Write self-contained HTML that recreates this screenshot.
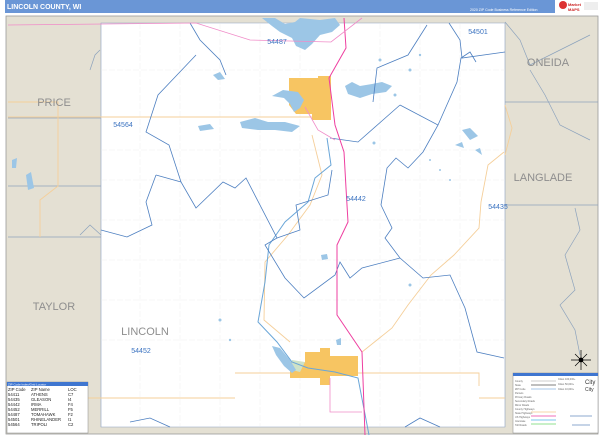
<!DOCTYPE html>
<html><head><style>
body{margin:0;width:600px;height:436px;overflow:hidden;background:#fff;font-family:"Liberation Sans",sans-serif}
</style></head><body>
<svg width="600" height="436" viewBox="0 0 600 436" xmlns="http://www.w3.org/2000/svg" font-family="Liberation Sans, sans-serif">
<rect width="600" height="436" fill="#fff"/>
<rect x="5" y="0" width="550" height="13" fill="#6a96d6"/>
<text x="7" y="9" font-size="7" font-weight="bold" fill="#fff">LINCOLN COUNTY, WI</text>
<text x="470" y="11" font-size="3.5" fill="#fff">2020 ZIP Code Business Reference Edition</text>
<rect x="557" y="0" width="43" height="13" fill="#fff"/>
<circle cx="563" cy="5" r="4" fill="#d33"/>
<text x="568" y="6" font-size="4" fill="#c22" font-weight="bold">Market</text>
<text x="568" y="11" font-size="4" fill="#c22" font-weight="bold">MAPS</text>
<rect x="584" y="2" width="14" height="8" fill="#eee"/>
<rect x="6" y="16" width="592" height="418" fill="#e4e0d3" stroke="#999" stroke-width="0.8"/>
<g fill="none" stroke="#8da3bd" stroke-width="0.7">
<path d="M8 118 H101 M8 186 H101 M8 237 H101 M505 102 H598 M505 205 H598"/>
<path d="M90 70 L95 55 L100 50 M80 235 L90 225 L101 235"/>
<path d="M505 22 L520 40 L530 65 L560 50 L590 35 M530 70 L545 95 L560 125 L590 140 M575 208 L580 230 L565 255 L575 290 L560 305 L575 330 L580 355"/>
</g>
<path d="M101 23 L505 23 L505 427 L101 427 Z" fill="#fff" stroke="#8aa0c0" stroke-width="0.6"/>
<g stroke="#e8e8e8" stroke-width="0.35" fill="none" stroke-dasharray="6 2">
<path d="M101 70 H505 M101 150 H505 M101 180 H505 M101 220 H505 M101 260 H505 M101 300 H505 M101 340 H505"/>
<path d="M140 23 V427 M180 23 V427 M220 23 V427 M260 23 V427 M300 23 V427 M380 23 V427 M420 23 V427 M460 23 V427"/>
</g>
<g stroke="#f5cf9a" stroke-width="0.9" fill="none">
<path d="M8 117 H330"/>
<path d="M235 373 H479 V386"/>
<path d="M8 398 H235 M479 398 H505"/>
<path d="M504 152 L488 165 L481 202 L479 228 L454 255 L431 275 L408 305 L392 328 L362 352"/>
<path d="M8 102 H58 V186 L40 200 V237"/>
<path d="M312 135 L322 175 L310 205 L288 235 L265 262 L264 320 L290 342"/>
<path d="M505 105 L512 128 L505 155"/>
</g>
<!-- cities -->
<path d="M289 78 L318 78 L318 76 L331 76 L331 120 L312 120 L312 114 L296 114 L289 105 Z" fill="#f7c562"/>
<path d="M290 362 L305 362 L305 352 L320 352 L320 348 L330 348 L330 356 L358 356 L358 376 L330 376 L330 385 L320 385 L320 378 L290 378 Z" fill="#f7c562"/>
<path d="M292 360 L305 362 L300 372 L292 370 Z" fill="#cfe2c7"/>
<!-- lakes -->
<g fill="#9cc6e6">
<path d="M262 18 L275 18 L285 24 L295 22 L300 18 L320 20 L335 18 L340 25 L332 32 L320 35 L312 44 L305 50 L296 46 L292 38 L280 32 L272 26 Z"/>
<path d="M283 90 L298 92 L304 100 L300 108 L294 112 L290 104 L284 98 L272 96 Z"/>
<path d="M240 122 L255 118 L268 122 L285 122 L300 126 L292 132 L275 130 L258 130 L242 128 Z"/>
<path d="M198 126 L210 124 L214 129 L200 131 Z"/>
<path d="M345 86 L352 82 L360 86 L372 84 L382 82 L392 86 L386 92 L372 94 L360 98 L348 94 Z"/>
<path d="M272 346 L280 348 L290 360 L296 370 L292 373 L284 366 L276 355 Z"/>
<path d="M336 340 L341 338 L341 345 L337 345 Z"/>
<path d="M321 255 L327 254 L328 259 L322 260 Z"/>
<path d="M462 130 L470 128 L478 136 L470 140 Z M455 145 L462 142 L464 148 Z M475 150 L480 148 L482 155 Z"/>
<path d="M213 75 L220 72 L225 79 L218 80 Z"/>
<path d="M12 160 L17 158 L16 168 L12 168 Z M26 175 L31 172 L34 188 L28 190 Z"/>
<circle cx="380" cy="60" r="1.5"/><circle cx="410" cy="70" r="1.5"/><circle cx="420" cy="55" r="1.2"/><circle cx="374" cy="143" r="1.5"/>
<circle cx="430" cy="160" r="1"/><circle cx="440" cy="170" r="1"/><circle cx="450" cy="180" r="1"/><circle cx="395" cy="95" r="1.5"/>
<circle cx="220" cy="320" r="1.5"/><circle cx="230" cy="340" r="1.2"/><circle cx="410" cy="285" r="1.5"/>
</g>
<path d="M327 138 L331 165 L315 178 L308 202 L285 222 L269 245 L265 282 L258 322 L277 342 L292 362 L308 368 L335 372 L358 378 L369 435" fill="none" stroke="#6aa6d8" stroke-width="1"/>
<g fill="none" stroke="#4d7fc0" stroke-width="0.8">
<path d="M190 23 L200 40 L220 60 L226 75"/>
<path d="M196 55 L177 75 L158 95 L146 132 L169 145 L181 182 L196 208 L223 182 L235 188 L246 178 L277 238 L265 245 L285 278 L304 298 L335 275 L340 262 L350 278 L362 268 L400 258"/>
<path d="M156 175 L146 202 L152 225 L127 237 L101 230"/>
<path d="M156 175 L181 182"/>
<path d="M277 238 L300 230 L296 205 L328 195 L332 170"/>
<path d="M400 105 L438 125 L423 152 L408 168 L396 158 L387 168 L381 205 L392 228 L385 238 L400 258 L423 278 L450 275 L465 308 L477 352 L504 358"/>
<path d="M438 125 L457 82 L461 58 L470 52 L476 62"/>
<path d="M400 105 L358 142 L330 138"/>
<path d="M373 102 L377 68 L408 55 L427 25"/>
<path d="M449 23 L460 40 L462 58 L505 52"/>
<path d="M130 422 L150 418 L170 427 M405 427 L420 418 L440 427"/>
</g>
<g fill="none" stroke="#ee3fa0" stroke-width="1">
<path d="M344 18 L346 48 L329 78 L335 125 L344 152 L346 188 L348 222 L337 245 L337 315 L362 352 L365 435"/>
</g>
<g fill="none" stroke="#f08cc8" stroke-width="0.8">
<path d="M8 25 L196 23 L250 40 L331 42 L362 18"/>
<path d="M305 107 L318 130 L335 140"/>
<path d="M330 378 V412 H362"/>
</g>
<g font-size="11" fill="#8e8e8e" text-anchor="middle">
<text x="54" y="106">PRICE</text>
<text x="54" y="310">TAYLOR</text>
<text x="548" y="66">ONEIDA</text>
<text x="543" y="181">LANGLADE</text>
<text x="145" y="335">LINCOLN</text>
</g>
<g font-size="7" fill="#3a72c0" text-anchor="middle">
<text x="277" y="44">54487</text>
<text x="478" y="34">54501</text>
<text x="123" y="127">54564</text>
<text x="356" y="201">54442</text>
<text x="498" y="209">54435</text>
<text x="141" y="353">54452</text>
</g>
<g stroke="#000" stroke-width="0.7" transform="translate(581,360)">
<path d="M0 -10 V10 M-10 0 H10 M-6 -6 L6 6 M-6 6 L6 -6"/>
<circle r="2" fill="#000"/>
</g>
<rect x="7" y="382" width="81" height="51" fill="#fff" stroke="#888" stroke-width="0.5"/>
<rect x="7" y="382" width="81" height="4" fill="#3f76d0"/>
<text x="8" y="385.5" font-size="3" fill="#fff">ZIP Code Index/Grid Locator</text>
<g font-size="4.2" fill="#222">
<text x="8" y="391">ZIP Code</text><text x="31" y="391">ZIP Name</text><text x="68" y="391">LOC</text>
<text x="8" y="396">54411</text><text x="31" y="396">ATHENS</text><text x="68" y="396">C7</text>
<text x="8" y="401">54435</text><text x="31" y="401">GLEASON</text><text x="68" y="401">I4</text>
<text x="8" y="406">54442</text><text x="31" y="406">IRMA</text><text x="68" y="406">F4</text>
<text x="8" y="411">54452</text><text x="31" y="411">MERRILL</text><text x="68" y="411">F5</text>
<text x="8" y="416">54487</text><text x="31" y="416">TOMAHAWK</text><text x="68" y="416">F2</text>
<text x="8" y="421">54501</text><text x="31" y="421">RHINELANDER</text><text x="68" y="421">I1</text>
<text x="8" y="426">54564</text><text x="31" y="426">TRIPOLI</text><text x="68" y="426">C2</text>
</g>
<rect x="513" y="373" width="85" height="60" fill="#fff" stroke="#888" stroke-width="0.5"/>
<rect x="513" y="373" width="85" height="3" fill="#3f76d0"/>
<g stroke-width="0.8">
<path d="M531 381 H556" stroke="#bbb"/><path d="M531 385 H556" stroke="#555"/>
<path d="M531 389 H556" stroke="#8ab4e0"/>
<path d="M531 412 H556" stroke="#f5c98c"/><path d="M531 416 H556" stroke="#ee3fa0"/>
<path d="M531 420 H556" stroke="#4fb0e8"/><path d="M531 424 H556" stroke="#6cd86c"/>
<path d="M570 416 H592 M572 425 H590" stroke="#6a8fc0"/>
</g>
<g font-size="2.5" fill="#666">
<text x="515" y="382">County</text><text x="515" y="386">State</text><text x="515" y="390">ZIP Code</text>
<text x="515" y="394">Parcels</text><text x="515" y="398">Primary Roads</text><text x="515" y="402">Secondary Roads</text>
<text x="515" y="406">Minor Roads</text><text x="515" y="410">County Highways</text><text x="515" y="414">State Highways</text>
<text x="515" y="418">US Highways</text><text x="515" y="422">Interstate</text><text x="515" y="426">Toll Roads</text>
<text x="558" y="380">Cities 100,000+</text><text x="558" y="385">Cities 50,000+</text><text x="558" y="390">Cities 10,000+</text>
</g>
<text x="585" y="384" font-size="6" fill="#333">City</text>
<text x="585" y="391" font-size="5" fill="#333">City</text>
</svg>
</body></html>
